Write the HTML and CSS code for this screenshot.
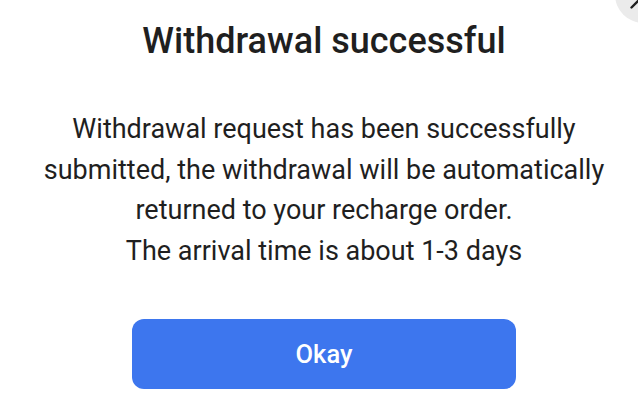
FILE: index.html
```html
<!DOCTYPE html>
<html>
<head>
<meta charset="utf-8">
<link rel="stylesheet" href="styles.css">
</head>
<body>
<div class="dialog">
  <button class="close" aria-label="Close">
    <svg width="57" height="57" viewBox="0 0 57 57"><path d="M16.5 41.5 L40.5 17.5 M16.5 17.5 L40.5 41.5" stroke="#1f1f1f" stroke-width="2.4" stroke-linecap="round"/></svg>
  </button>
  <h1 class="title">Withdrawal successful</h1>
  <p class="message">Withdrawal request has been successfully submitted, the withdrawal will be automatically returned to your recharge order.<br>The arrival time is about 1-3 days</p>
  <button class="okay">Okay</button>
</div>
</body>
</html>
```
FILE: styles.css
```css
html, body {
  margin: 0;
  padding: 0;
  background: #ffffff;
}
body {
  width: 638px;
  height: 410px;
  overflow: hidden;
  font-family: Roboto, "Liberation Sans", sans-serif;
}
.dialog {
  position: relative;
  display: flex;
  flex-direction: column;
  align-items: center;
  padding: 19px 0 0 10px;
  width: 638px;
  height: 410px;
  box-sizing: border-box;
  overflow: hidden;
}
.close {
  position: absolute;
  left: 614.5px;
  top: -34.5px;
  width: 57px;
  height: 57px;
  border-radius: 50%;
  border: none;
  padding: 0;
  background: #ebebeb;
}
.close svg {
  display: block;
}
.title {
  margin: 0;
  font-size: 36px;
  line-height: 44px;
  font-weight: 500;
  color: #1f1f1f;
}
.message {
  margin: 46px 0 0;
  width: 590px;
  text-align: center;
  font-size: 27px;
  line-height: 40.5px;
  color: #1f1f1f;
}
.okay {
  margin-top: 48px;
  width: 384px;
  height: 70px;
  border: none;
  border-radius: 12px;
  background: #3d76ee;
  color: #ffffff;
  font-family: Roboto, "Liberation Sans", sans-serif;
  font-size: 25.5px;
  font-weight: 500;
}
```
